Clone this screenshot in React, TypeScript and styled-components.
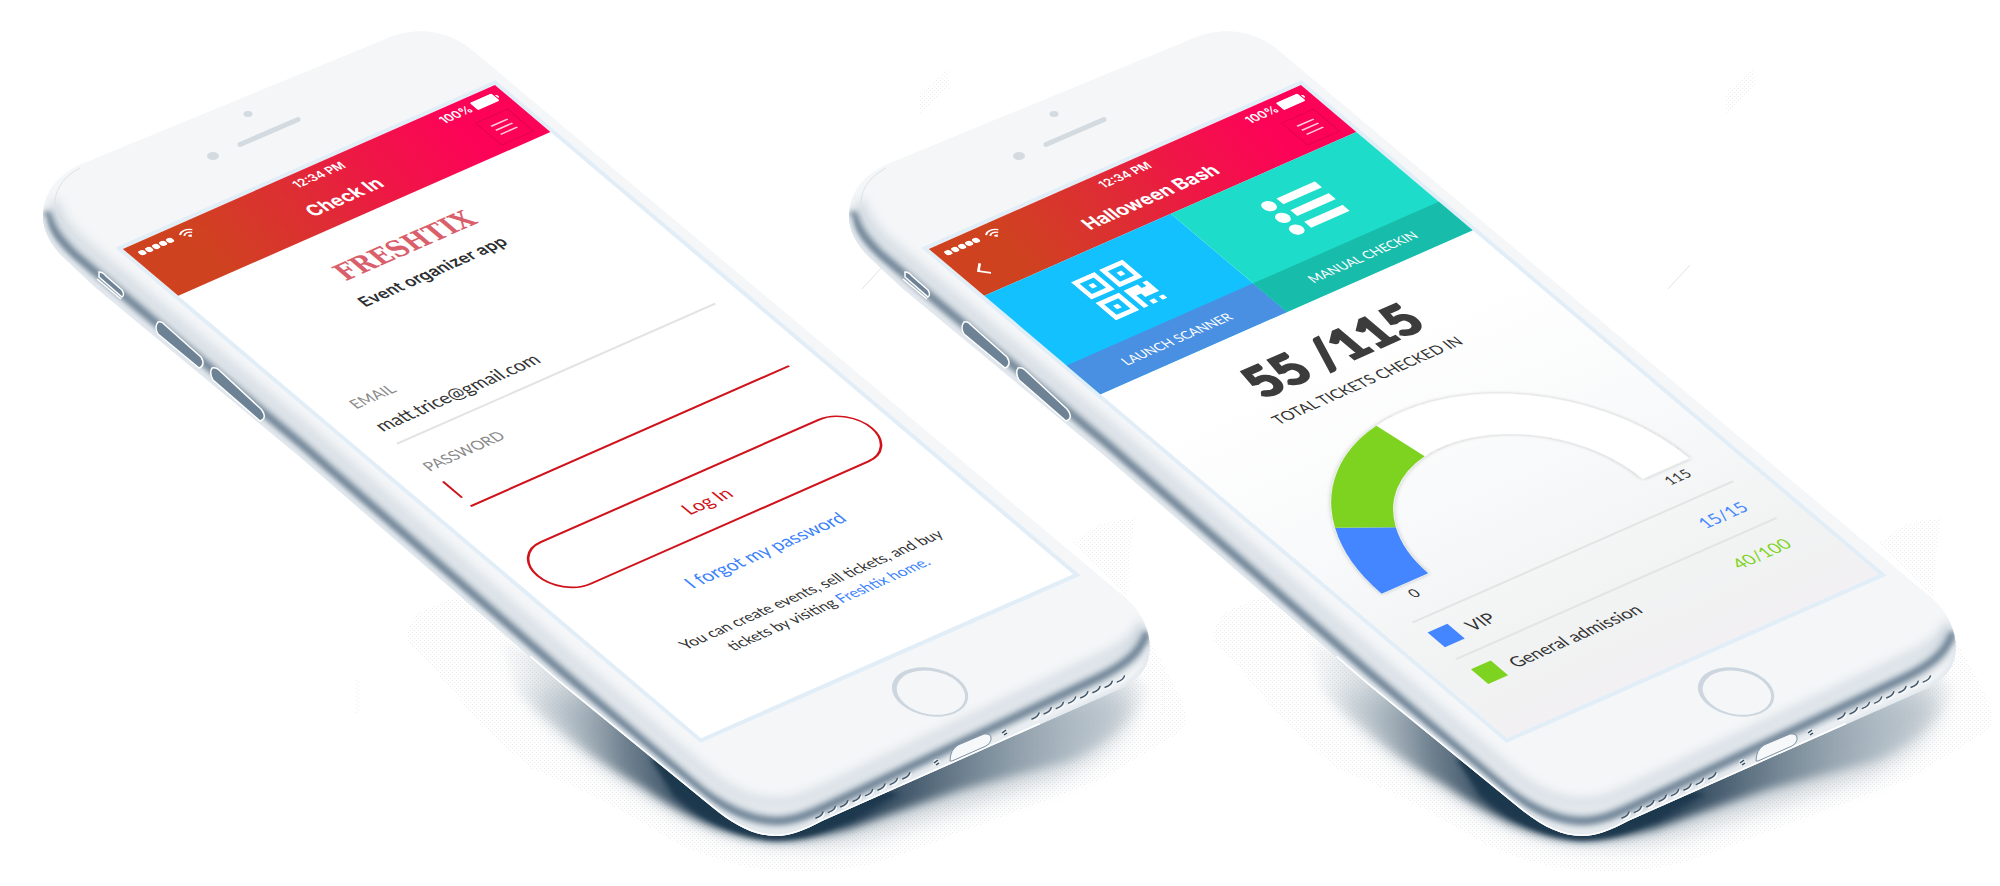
import React from "react";
import styled, { createGlobalStyle, css } from "styled-components";

const GlobalStyle = createGlobalStyle`
  *, *::before, *::after { box-sizing: border-box; }
  body {
    margin: 0;
    background: #ffffff;
    overflow-x: hidden;
    font-family: Lato, "Liberation Sans", sans-serif;
  }
`;

/* Isometric projection shared by the screen and the parts printed on the glass. */
const ISO = "matrix(0.9923, -0.437, 0.8669, 0.7335, 122.8, 248.9)";

const Stage = styled.main`
  display: flex;
  justify-content: center;
  padding-right: 388px;
  overflow: hidden;
`;

const Device = styled.section`
  position: relative;
  flex: 0 0 auto;
  width: 806px;
  height: 886px;
`;

const DeviceArt = styled.svg`
  position: absolute;
  inset: 0;
  overflow: visible;
  pointer-events: none;
`;

const Screen = styled.div<{ $tinted?: boolean }>`
  position: absolute;
  top: 0;
  left: 0;
  display: flex;
  flex-direction: column;
  width: 375px;
  height: 667px;
  transform: ${ISO};
  transform-origin: 0 0;
  box-shadow: 0 0 0 4px #e1edf7;
  background: ${(p) =>
    p.$tinted
      ? "linear-gradient(180deg, #ffffff 38%, #f8f9fa 66%, #f1f3f3 88%, #f2f0f2 100%)"
      : "#ffffff"};
`;

const Header = styled.header`
  height: 64px;
  color: #ffffff;
  font-family: Inter, Roboto, sans-serif;
  background: linear-gradient(100deg, #cf4220 16%, #de2d34 42%, #ee1745 60%, #fd0358 84%);
`;

const StatusBar = styled.div`
  display: grid;
  grid-template-columns: 1fr auto 1fr;
  align-items: center;
  height: 22px;
  padding: 0 6px 0 7px;
  font-size: 11px;
  font-weight: 600;
  line-height: 22px;
`;

const StatusGroup = styled.div<{ $end?: boolean }>`
  display: flex;
  align-items: center;
  justify-content: ${(p) => (p.$end ? "flex-end" : "flex-start")};
  gap: ${(p) => (p.$end ? "3px" : "7px")};
`;

const NavBar = styled.div`
  display: grid;
  grid-template-columns: 43px 1fr 43px;
  align-items: center;
  height: 38px;
`;

const NavTitle = styled.h1`
  grid-column: 2;
  margin: 0;
  text-align: center;
  font-size: 17px;
  font-weight: 700;
  line-height: 24px;
`;

const NavButton = styled.button<{ $framed?: boolean }>`
  display: flex;
  align-items: center;
  justify-content: center;
  width: 33px;
  height: 31px;
  padding: 0;
  color: inherit;
  background: none;
  border: ${(p) => (p.$framed ? "1px solid rgba(150, 0, 60, 0.25)" : "0")};
  margin-left: ${(p) => (p.$framed ? "0" : "2px")};
`;

const NavSlot = styled.div`
  grid-row: 1;
  &:last-child { grid-column: 3; }
`;

const LoginForm = styled.form`
  display: flex;
  flex-direction: column;
  padding: 33px 25px 0 29px;
`;

const Logo = styled.div`
  align-self: center;
  font-family: "DejaVu Serif Condensed", "DejaVu Serif", serif;
  font-stretch: condensed;
  font-size: 25px;
  font-weight: 700;
  line-height: 24px;
  color: #d9606a;
`;

const Tagline = styled.p`
  margin: 12px 4px 68px 0;
  text-align: center;
  font-family: Inter, Roboto, sans-serif;
  font-size: 15px;
  font-weight: 600;
  line-height: 20px;
  color: #2d2f31;
`;

const Field = styled.div`
  position: relative;
  display: flex;
  flex-direction: column;
  gap: 7px;
  margin-bottom: 22px;
`;

const FieldLabel = styled.label`
  font-size: 14px;
  font-weight: 400;
  line-height: 20px;
  color: #8a8a8a;
`;

const TextInput = styled.input<{ $active?: boolean }>`
  width: 100%;
  height: 36px;
  padding: 0 0 10px;
  border: 0;
  border-bottom: 2px solid ${(p) => (p.$active ? "#d0121b" : "#e3e3e3")};
  background: none;
  font-family: inherit;
  font-size: 17px;
  color: #333333;
  outline: none;
`;

const Caret = styled.span`
  position: absolute;
  left: 0;
  bottom: 12px;
  width: 2px;
  height: 22px;
  background: #d0121b;
`;

const LoginButton = styled.button`
  height: 59px;
  margin: 36px -7px 26px -11px;
  padding: 0 0 0 4px;
  border: 2px solid #d0121b;
  border-radius: 30px;
  background: none;
  font-family: inherit;
  font-size: 17px;
  color: #d0121b;
`;

const link = css`
  color: #3b82fb;
  text-decoration: none;
`;

const ForgotLink = styled.a`
  ${link}
  align-self: center;
  font-size: 17px;
  line-height: 24px;
`;

const HomeLink = styled.a`
  ${link}
`;

const Note = styled.p`
  margin: 31px 0 0;
  text-align: center;
  font-size: 14px;
  line-height: 20px;
  color: #333333;
`;

const Tiles = styled.nav`
  display: grid;
  grid-template-columns: 1fr 1fr;
`;

const Tile = styled.button<{ $color: string }>`
  display: flex;
  flex-direction: column;
  padding: 0;
  border: 0;
  font-family: inherit;
  color: #ffffff;
  background: ${(p) => p.$color};
`;

const TileIcon = styled.span`
  display: flex;
  align-items: center;
  justify-content: center;
  width: 100%;
  height: 95px;
`;

const TileLabel = styled.span<{ $color: string }>`
  width: 100%;
  font-size: 12px;
  font-weight: 400;
  line-height: 39px;
  text-align: center;
  background: ${(p) => p.$color};
`;

const Total = styled.p`
  margin: 29px 0 0;
  text-align: center;
  font-size: 46px;
  font-weight: 900;
  line-height: 46px;
  color: #3c3c3c;
  -webkit-text-stroke: 2px #3c3c3c;
`;

const TotalCaption = styled.p`
  margin: 8px 0 29px;
  text-align: center;
  font-size: 14px;
  line-height: 20px;
  color: #333333;
`;

const GaugeSvg = styled.svg`
  display: block;
  overflow: visible;
`;

const GaugeScale = styled.div`
  display: flex;
  justify-content: space-between;
  padding: 0 46px 0 48px;
  font-size: 13px;
  line-height: 20px;
  color: #333333;
`;

const Legend = styled.ul`
  margin: 15px 24px 0 28px;
  padding: 0;
  list-style: none;
`;

const LegendRow = styled.li`
  display: flex;
  align-items: center;
  gap: 11px;
  height: 50px;
  padding: 0 11px 0 2px;
  border-top: 2px solid #e3e4e4;
  font-size: 16px;
  color: #333333;
`;

const Swatch = styled.span<{ $color: string }>`
  width: 20px;
  height: 20px;
  background: ${(p) => p.$color};
`;

const LegendCount = styled.span<{ $color: string }>`
  margin-left: auto;
  color: ${(p) => p.$color};
`;

const BODY =
  "M84 163 L383 40 C400 32 418 30 432 32 C452 35 466 44 478 55 L1128 600 C1143 614 1150 632 1150 648 C1149 668 1140 678 1122 688 L822 821 C805 830 790 836 776 836 C755 836 735 826 712 807 L560 683 L300 457 L96 288 L62 256 C50 244 43 230 43 216 C43 195 55 175 84 163 Z";
const CORE =
  "M47 212 C50 228 60 240 74 254 L300 443 L560 670 L690 781 C720 808 752 821 776 821 C795 821 812 813 825 807 L1100 677 C1126 664 1141 652 1147 632";
const INNER =
  "M54 200 C58 216 66 228 84 244 L310 432 L570 658 L700 768 C728 793 752 803 776 803 C795 803 812 795 825 789 L1095 661 C1122 648 1136 640 1143 622";
const RIM =
  "M43 216 C43 230 50 244 62 256 L96 288 L300 457 L560 683 L712 807 C735 826 755 836 776 836 C790 836 805 830 822 821 L1122 688 C1140 678 1149 668 1150 648";
const RIM_HIGHLIGHT =
  "M530 657 L560 683 L712 807 C735 826 755 836 776 836 C790 836 805 830 822 821 L1040 724";

const KEYS = [
  "M158 322 Q162 321 165 325 L201 357 Q206 365 199 368 L158 334 Q154 327 158 322 Z",
  "M212 368 Q216 367 219 370 L261 409 Q268 418 260 421 L213 380 Q209 373 212 368 Z",
];

const GRILLE = [
  ...Array.from({ length: 8 }, (_, i) => [820 + i * 12.4, 815 - i * 5.6]),
  ...Array.from({ length: 8 }, (_, i) => [1036 + i * 12.2, 716 - i * 5.3]),
];

function PhoneArt({ id }: { id: string }) {
  return (
    <DeviceArt width="1200" height="886" viewBox="0 0 1200 886" aria-hidden="true">
      <defs>
        <clipPath id={`${id}-clip`}>
          <path d={BODY} />
        </clipPath>
        <filter id={`${id}-b2`} x="-20%" y="-20%" width="140%" height="140%">
          <feGaussianBlur stdDeviation="2.5" />
        </filter>
        <filter id={`${id}-b5`} x="-20%" y="-20%" width="140%" height="140%">
          <feGaussianBlur stdDeviation="5" />
        </filter>
        <filter id={`${id}-b12`} x="-20%" y="-30%" width="140%" height="160%">
          <feGaussianBlur stdDeviation="12" />
        </filter>
        <linearGradient id={`${id}-cast`} gradientUnits="userSpaceOnUse" x1="490" y1="0" x2="1160" y2="0">
          <stop offset="0" stopColor="#a3b1bc" stopOpacity="0" />
          <stop offset="0.1" stopColor="#95a5b1" stopOpacity="0.35" />
          <stop offset="0.2" stopColor="#4a6072" stopOpacity="0.7" />
          <stop offset="0.32" stopColor="#1d374d" />
          <stop offset="0.54" stopColor="#1d374d" />
          <stop offset="0.64" stopColor="#3f5669" stopOpacity="0.9" />
          <stop offset="0.76" stopColor="#6f8392" stopOpacity="0.75" />
          <stop offset="0.9" stopColor="#a3b1bc" stopOpacity="0.5" />
          <stop offset="1" stopColor="#b4c0c9" stopOpacity="0" />
        </linearGradient>
        <pattern id={`${id}-dots`} width="4" height="4" patternUnits="userSpaceOnUse">
          <rect x="0" y="0" width="1" height="1" fill="#ececec" />
          <rect x="2" y="2" width="1" height="1" fill="#ececec" />
        </pattern>
      </defs>

      <g fill={`url(#${id}-dots)`}>
        <path d="M919 94 L936 78 L948 69 L949 88 L933 102 L919 114 Z" />
        <path d="M1073 543 L1100 524 L1135 518 L1129 560 L1128 600 Z" />
        <path d="M356 680 h3 v34 h-3 Z" />
        <path d="M458 596 L420 612 Q404 626 409 644 L430 664 L480 724 L530 768 Q600 795 680 845 Q776 888 880 862 L1100 780 L1180 732 Q1190 722 1182 700 L1150 640 L800 760 Z" />
      </g>
      <path d="M862 289 L884 265" stroke="#e2e2e2" />

      <path
        d="M530 690 Q570 750 680 812 Q776 862 880 832 L1060 774 Q1140 735 1130 690 L800 740 Z"
        fill="#9dabb6"
        opacity="0.55"
        filter={`url(#${id}-b12)`}
      />
      <path
        d="M500 640 L515 692 Q580 752 640 786 Q715 838 776 840 Q806 840 850 828 L960 790 L1070 760 Q1130 732 1150 690 L1100 640 L800 760 Z"
        fill={`url(#${id}-cast)`}
        filter={`url(#${id}-b5)`}
      />
      <path
        d="M650 758 L674 796 Q726 838 776 840 Q804 840 830 829 L900 794 L800 780 Z"
        fill="#1d374d"
        filter={`url(#${id}-b2)`}
      />

      <path d={BODY} fill="#f4f6f8" />
      <g clipPath={`url(#${id}-clip)`} fill="none">
        <path d={INNER} stroke="#c8d2db" strokeWidth="10" opacity="0.65" filter={`url(#${id}-b5)`} />
        <path d={CORE} stroke="#8195a6" strokeWidth="10" opacity="0.8" filter={`url(#${id}-b5)`} />
        <path d={CORE} stroke="#5a7186" strokeWidth="6" opacity="0.75" filter={`url(#${id}-b2)`} />
        <path d={RIM} stroke="#dfe6ec" strokeWidth="6" filter={`url(#${id}-b2)`} />
        <path d={RIM_HIGHLIGHT} stroke="#ffffff" strokeWidth="3" />
      </g>
      <path d="M80 168 C62 178 55 190 55 204 C57 222 66 232 80 245 L236 378" fill="none" stroke="#dde2e7" />

      <g stroke="#ffffff" strokeWidth="1.500">
        <path d="M99 272 Q103 272 106 276 L122 290 Q125 295 122 297 L99 277 Z" fill="#6d8395" />
        <path d="M97 279 L121 299" fill="none" />
        {KEYS.map((d) => (
          <path key={d} d={d} fill="#6d8395" />
        ))}
      </g>

      <g fill="#d3dae0">
        <ellipse cx="213" cy="156" rx="6" ry="4" />
        <ellipse cx="248" cy="114" rx="4.5" ry="3" />
      </g>
      <path d="M240 144.500 L298 119.500" stroke="#d3dae0" strokeWidth="5" strokeLinecap="round" />

      <g transform={ISO}>
        <circle cx="188" cy="716" r="29" fill="#cdd6de" />
        <circle cx="188" cy="717" r="26" fill="#f4f6f8" />
      </g>

      <path
        d="M950 761 Q950 750 958 745 L984 734 Q992 733 991 740 Q990 744 986 746 L952 761 Z"
        fill="#f6f8fa"
        stroke="#8093a4"
      />
      {[[937, 763], [1005, 733]].map(([x, y]) => (
        <g key={x}>
          <circle cx={x} cy={y} r="4" fill="#e6ebef" />
          <path d={`M${x - 3} ${y} l4 -3 M${x - 1} ${y + 2} l3 -2`} stroke="#33495c" strokeWidth="1.500" />
        </g>
      ))}
      {GRILLE.map(([x, y]) => (
        <g key={x} fill="none" strokeLinecap="round">
          <path d={`M${x - 2} ${y + 4} q5 -1 6 -6`} stroke="#f6f8fa" strokeWidth="2" />
          <path d={`M${x - 4} ${y + 3} q6 -2 7 -6`} stroke="#42586b" strokeWidth="1.500" />
        </g>
      ))}
    </DeviceArt>
  );
}

function ScreenHeader({ title, back }: { title: string; back?: boolean }) {
  return (
    <Header>
      <StatusBar>
        <StatusGroup>
          <svg width="34" height="6" viewBox="0 0 34 6" fill="#fff" aria-hidden="true">
            {[3, 10, 17, 24, 31].map((cx) => (
              <circle key={cx} cx={cx} cy="3" r="3" />
            ))}
          </svg>
          <svg width="14" height="11" viewBox="0 0 14 11" fill="none" stroke="#fff" strokeWidth="1.500" aria-hidden="true">
            <path d="M0.800 4.200 A8.800 8.800 0 0 1 13.200 4.200" />
            <path d="M3 6.500 A5.600 5.600 0 0 1 11 6.500" />
            <path d="M7 10.500 L5 8.400 A2.800 2.800 0 0 1 9 8.400 Z" fill="#fff" stroke="none" />
          </svg>
        </StatusGroup>
        <span>12:34 PM</span>
        <StatusGroup $end>
          <span>100%</span>
          <svg width="25" height="10" viewBox="0 0 25 10" fill="#fff" aria-hidden="true">
            <rect x="0" y="0" width="22" height="10" rx="1.500" />
            <path d="M23 3 Q25 3.500 25 5 Q25 6.500 23 7 Z" />
          </svg>
        </StatusGroup>
      </StatusBar>
      <NavBar>
        {back && (
          <NavSlot>
            <NavButton type="button" aria-label="Back">
              <svg width="10" height="19" viewBox="0 0 10 19" fill="none" stroke="#fff" strokeWidth="2">
                <path d="M8.500 1 L1.500 7.500 L8.500 14" />
              </svg>
            </NavButton>
          </NavSlot>
        )}
        <NavTitle>{title}</NavTitle>
        <NavSlot>
          <NavButton type="button" aria-label="Menu" $framed>
            <svg width="17" height="14" viewBox="0 0 17 14" stroke="#fff" strokeWidth="1.500" opacity="0.8">
              <path d="M0 1.500 H17 M0 7 H17 M0 12.500 H17" />
            </svg>
          </NavButton>
        </NavSlot>
      </NavBar>
    </Header>
  );
}

function CheckInPhone() {
  return (
    <Device aria-label="Check In">
      <PhoneArt id="login" />
      <Screen>
        <ScreenHeader title="Check In" />
        <LoginForm onSubmit={(e) => e.preventDefault()}>
          <Logo>FRESHTIX</Logo>
          <Tagline>Event organizer app</Tagline>
          <Field>
            <FieldLabel htmlFor="email">EMAIL</FieldLabel>
            <TextInput id="email" type="email" defaultValue="matt.trice@gmail.com" />
          </Field>
          <Field>
            <FieldLabel htmlFor="password">PASSWORD</FieldLabel>
            <TextInput id="password" type="password" $active />
            <Caret />
          </Field>
          <LoginButton type="submit">Log In</LoginButton>
          <ForgotLink href="#forgot">I forgot my password</ForgotLink>
          <Note>
            You can create events, sell tickets, and buy
            <br />
            tickets by visiting <HomeLink href="#home">Freshtix home.</HomeLink>
          </Note>
        </LoginForm>
      </Screen>
    </Device>
  );
}

const GAUGE = { cx: 185, cy: 158, outer: 155, inner: 108 };

function arc(from: number, to: number) {
  const point = (deg: number, r: number) => {
    const a = (deg * Math.PI) / 180;
    return `${GAUGE.cx - r * Math.cos(a)} ${GAUGE.cy - r * Math.sin(a)}`;
  };
  const { outer, inner } = GAUGE;
  return `M${point(from, outer)} A${outer} ${outer} 0 0 1 ${point(to, outer)} L${point(to, inner)} A${inner} ${inner} 0 0 0 ${point(from, inner)} Z`;
}

const TICKETS = [
  { name: "VIP", count: "15/15", color: "#4486ff", from: 0, to: 30 },
  { name: "General admission", count: "40/100", color: "#7ed321", from: 30, to: 80 },
];

function EventPhone() {
  return (
    <Device aria-label="Halloween Bash">
      <PhoneArt id="event" />
      <Screen $tinted>
        <ScreenHeader title="Halloween Bash" back />
        <Tiles>
          <Tile type="button" $color="#14c1ff">
            <TileIcon>
              <svg width="52" height="52" viewBox="0 0 1408 1408" fill="#fff" aria-hidden="true">
                <path d="M384 1152v-128h-128v128h128zm0-768v-128h-128v128h128zm768 0v-128h-128v128h128zm-1024 896h384v-384h-384v384zm0-768h384v-384h-384v384zm768 0h384v-384h-384v384zm-256 256v640h-640v-640h640zm512 512v128h-128v-128h128zm256 0v128h-128v-128h128zm0-512v384h-384v-128h-128v384h-128v-640h384v128h128v-128h128zm-768-768v640h-640v-640h640zm768 0v640h-640v-640h640z" />
              </svg>
            </TileIcon>
            <TileLabel $color="#4990e2">LAUNCH SCANNER</TileLabel>
          </Tile>
          <Tile type="button" $color="#1ddcc9">
            <TileIcon>
              <svg width="56" height="44" viewBox="0 0 56 44" fill="#fff" aria-hidden="true">
                {[6, 22, 38].map((y) => (
                  <g key={y}>
                    <circle cx="6" cy={y} r="6" />
                    <rect x="17" y={y - 4} width="39" height="8" />
                  </g>
                ))}
              </svg>
            </TileIcon>
            <TileLabel $color="#18bcab">MANUAL CHECKIN</TileLabel>
          </Tile>
        </Tiles>
        <Total>55 /115</Total>
        <TotalCaption>TOTAL TICKETS CHECKED IN</TotalCaption>
        <GaugeSvg width="375" height="160" viewBox="0 0 375 160" role="img" aria-label="55 of 115 tickets">
          <defs>
            <filter id="gauge-shadow" x="-10%" y="-10%" width="120%" height="130%">
              <feDropShadow dx="0" dy="0" stdDeviation="2" floodColor="#000" floodOpacity="0.3" />
            </filter>
          </defs>
          <path d={arc(0, 180)} fill="#fff" filter="url(#gauge-shadow)" />
          {TICKETS.map((t) => (
            <path key={t.name} d={arc(t.from, t.to)} fill={t.color} />
          ))}
        </GaugeSvg>
        <GaugeScale>
          <span>0</span>
          <span>115</span>
        </GaugeScale>
        <Legend>
          {TICKETS.map((t) => (
            <LegendRow key={t.name}>
              <Swatch $color={t.color} />
              <span>{t.name}</span>
              <LegendCount $color={t.color}>{t.count}</LegendCount>
            </LegendRow>
          ))}
        </Legend>
      </Screen>
    </Device>
  );
}

export default function App() {
  return (
    <>
      <GlobalStyle />
      <Stage>
        <CheckInPhone />
        <EventPhone />
      </Stage>
    </>
  );
}
